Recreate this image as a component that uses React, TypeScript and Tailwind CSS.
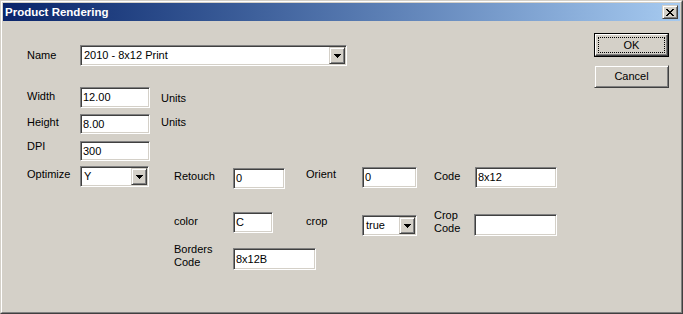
import React from "react";

const sunken =
  "bg-white border border-t-[#808080] border-l-[#808080] border-r-white border-b-white shadow-[inset_1px_1px_0_#404040,inset_-1px_-1px_0_#d4d0c8]";
const raised =
  "bg-[#d4d0c8] border border-t-[#d4d0c8] border-l-[#d4d0c8] border-r-[#404040] border-b-[#404040] shadow-[inset_1px_1px_0_#ffffff,inset_-1px_-1px_0_#808080]";

function Arrow() {
  return (
    <svg width="7" height="4" viewBox="0 0 7 4" shapeRendering="crispEdges">
      <path d="M0 0h7v1h-7z M1 1h5v1h-5z M2 2h3v1h-3z M3 3h1v1h-1z" fill="#000" />
    </svg>
  );
}

function Edit({ value, className }: { value: string; className: string }) {
  return (
    <div className={`${sunken} ${className} shrink-0 flex items-center pl-[2px] leading-[13px] text-black`}>
      {value}
    </div>
  );
}

function Combo({ value, className }: { value: string; className: string }) {
  return (
    <div className={`${sunken} ${className} shrink-0 flex items-stretch p-[1px]`}>
      <div className="flex-1 flex items-center pl-[2px] leading-[13px] text-black">{value}</div>
      <div className={`${raised} w-[16px] flex items-center justify-center`}>
        <Arrow />
      </div>
    </div>
  );
}

function Label({ children, className }: { children: React.ReactNode; className: string }) {
  return <div className={`${className} shrink-0 leading-[13px] text-black`}>{children}</div>;
}

export default function App() {
  return (
    <div className="w-[683px] h-[314px] border border-t-[#d4d0c8] border-l-[#d4d0c8] border-r-[#404040] border-b-[#404040] bg-[#d4d0c8] font-['Liberation_Sans',Arial,sans-serif] text-[11px]">
      <div className="w-full h-full border border-t-white border-l-white border-r-[#808080] border-b-[#808080] p-[1px] flex flex-col">
        {/* Title bar */}
        <div className="h-[18px] shrink-0 bg-gradient-to-r from-[#0a246a] to-[#a6caf0] flex items-center pl-[2px] pr-[2px]">
          <div className="text-white font-bold text-[11.5px] leading-[14px] flex-1">Product Rendering</div>
          <div className={`${raised} w-[16px] h-[14px] flex items-center justify-center`}>
            <svg width="8" height="7" viewBox="0 0 8 7" shapeRendering="crispEdges">
              <path
                d="M0 0h2v1h-2z M6 0h2v1h-2z M1 1h2v1h-2z M5 1h2v1h-2z M2 2h4v1h-4z M3 3h2v1h-2z M2 4h4v1h-4z M1 5h2v1h-2z M5 5h2v1h-2z M0 6h2v1h-2z M6 6h2v1h-2z"
                fill="#000"
              />
            </svg>
          </div>
        </div>

        {/* Body */}
        <div className="flex-1 flex flex-row">
          {/* Form */}
          <div className="flex flex-col pl-[24px]">
            <div className="mt-[24px] h-[21px] flex items-start">
              <Label className="w-[53px] mt-[4px]">Name</Label>
              <Combo value="2010 - 8x12 Print" className="w-[267px] h-[21px]" />
            </div>

            <div className="mt-[21px] h-[21px] flex items-start">
              <Label className="w-[53px] mt-[3px]">Width</Label>
              <Edit value="12.00" className="w-[70px] h-[21px]" />
              <Label className="ml-[11px] mt-[5px]">Units</Label>
            </div>

            <div className="mt-[6px] h-[20px] flex items-start">
              <Label className="w-[53px] mt-[2px]">Height</Label>
              <Edit value="8.00" className="w-[70px] h-[20px]" />
              <Label className="ml-[11px] mt-[2px]">Units</Label>
            </div>

            <div className="mt-[6px] h-[21px] flex items-start">
              <Label className="w-[53px] mt-[0px]">DPI</Label>
              <Edit value="300" className="w-[70px] h-[20px] mt-[1px]" />
            </div>

            <div className="mt-[5px] h-[23px] flex items-start">
              <Label className="w-[53px] mt-[2px]">Optimize</Label>
              <Combo value="Y" className="w-[69px] h-[21px]" />
              <Label className="ml-[25px] w-[59px] mt-[4px]">Retouch</Label>
              <Edit value="0" className="w-[52px] h-[21px] mt-[2px]" />
              <Label className="ml-[21px] w-[56px] mt-[2px]">Orient</Label>
              <Edit value="0" className="w-[55px] h-[21px] mt-[1px]" />
              <Label className="ml-[17px] w-[41px] mt-[4px]">Code</Label>
              <Edit value="8x12" className="w-[82px] h-[21px] mt-[1px]" />
            </div>

            <div className="mt-[20px] h-[27px] flex items-start pl-[147px]">
              <Label className="w-[59px] mt-[6px]">color</Label>
              <Edit value="C" className="w-[40px] h-[21px] mt-[3px]" />
              <Label className="ml-[33px] w-[56px] mt-[6px]">crop</Label>
              <Combo value="true" className="w-[55px] h-[21px] mt-[6px]" />
              <Label className="ml-[17px] w-[40px] mt-[0px]">
                Crop
                <br />
                Code
              </Label>
              <Edit value="" className="w-[83px] h-[22px] mt-[5px]" />
            </div>

            <div className="mt-[7px] h-[27px] flex items-start pl-[147px]">
              <Label className="w-[59px] mt-[0px]">
                Borders
                <br />
                Code
              </Label>
              <Edit value="8x12B" className="w-[83px] h-[22px] mt-[5px]" />
            </div>
          </div>

          {/* Buttons */}
          <div className="ml-auto pr-[11px] pt-[12px] flex flex-col">
            <div className="w-[75px] h-[24px] border border-black">
              <div className="w-full h-full border border-t-white border-l-white border-r-[#404040] border-b-[#404040] shadow-[inset_-1px_-1px_0_#808080] p-[2px]">
                <div className="w-full h-full border border-dotted border-black flex items-center justify-center text-black leading-[13px]">
                  OK
                </div>
              </div>
            </div>
            <div className={`${raised} mt-[8px] w-[75px] h-[23px] flex items-center justify-center text-black leading-[13px]`}>
              Cancel
            </div>
          </div>
        </div>
      </div>
    </div>
  );
}
